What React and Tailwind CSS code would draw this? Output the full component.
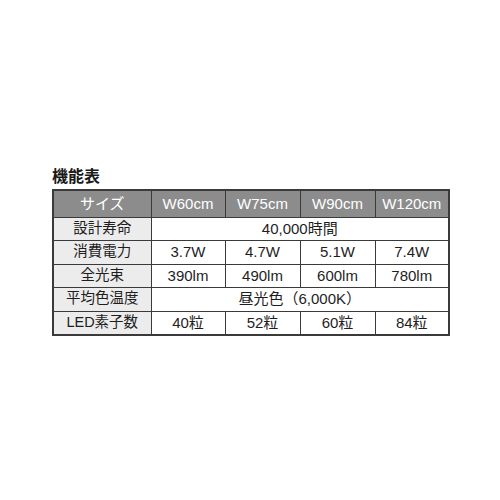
export default function App() {
  const font = { fontFamily: '"Liberation Sans", "Noto Sans CJK JP", sans-serif' };
  const head = "border border-[#3a3a3a] bg-[#8c8c8c] text-white text-[15px] h-[27px] text-center p-0 font-normal";
  const label = "border border-[#3a3a3a] bg-[#ececec] text-[14.5px] text-[#1e1e1e] h-[23px] text-center p-0 font-normal";
  const val = "border border-[#3a3a3a] bg-white text-[15px] text-[#1e1e1e] h-[23px] text-center p-0";
  return (
    <div className="w-[500px] h-[500px] bg-white" style={font}>
      <div className="pt-[169px] pl-[52px]">
        <div className="text-[16px] font-bold text-[#1a1a1a] leading-none h-[20px]">機能表</div>
        <table className="border-collapse border-2 border-[#3a3a3a] table-fixed w-[396px]">
          <colgroup>
            <col className="w-[98px]" />
            <col className="w-[74px]" />
            <col className="w-[75px]" />
            <col className="w-[75px]" />
            <col className="w-[74px]" />
          </colgroup>
          <thead>
            <tr>
              <th className={head}>サイズ</th>
              <th className={head}>W60cm</th>
              <th className={head}>W75cm</th>
              <th className={head}>W90cm</th>
              <th className={head}>W120cm</th>
            </tr>
          </thead>
          <tbody>
            <tr>
              <td className={label}>設計寿命</td>
              <td className={val} colSpan={4}>40,000時間</td>
            </tr>
            <tr>
              <td className={label}>消費電力</td>
              <td className={val}>3.7W</td>
              <td className={val}>4.7W</td>
              <td className={val}>5.1W</td>
              <td className={val}>7.4W</td>
            </tr>
            <tr>
              <td className={label}>全光束</td>
              <td className={val}>390lm</td>
              <td className={val}>490lm</td>
              <td className={val}>600lm</td>
              <td className={val}>780lm</td>
            </tr>
            <tr>
              <td className={label}>平均色温度</td>
              <td className={val} colSpan={4}>昼光色（6,000K）</td>
            </tr>
            <tr>
              <td className={label}>LED素子数</td>
              <td className={val}>40粒</td>
              <td className={val}>52粒</td>
              <td className={val}>60粒</td>
              <td className={val}>84粒</td>
            </tr>
          </tbody>
        </table>
      </div>
    </div>
  );
}
